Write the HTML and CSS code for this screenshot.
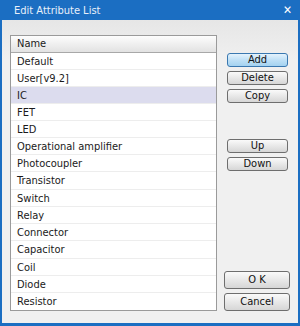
FILE: index.html
```html
<!DOCTYPE html>
<html lang="en">
<head>
  <meta charset="UTF-8" />
  <title>Edit Attribute List</title>
  <link rel="stylesheet" href="styles.css">
</head>
<body>
  <div class="window">
    <div class="titlebar">
      <span class="title">Edit Attribute List</span>
      <span class="close">&#x2715;</span>
    </div>
    <div class="content">
      <div class="listbox">
        <div class="list-header">Name</div>
        <div class="row">Default</div>
        <div class="row">User[v9.2]</div>
        <div class="row selected">IC</div>
        <div class="row">FET</div>
        <div class="row">LED</div>
        <div class="row">Operational amplifier</div>
        <div class="row">Photocoupler</div>
        <div class="row">Transistor</div>
        <div class="row">Switch</div>
        <div class="row">Relay</div>
        <div class="row">Connector</div>
        <div class="row">Capacitor</div>
        <div class="row">Coil</div>
        <div class="row">Diode</div>
        <div class="row">Resistor</div>
      </div>
      <div class="buttons">
        <button class="btn default">Add</button>
        <button class="btn">Delete</button>
        <button class="btn">Copy</button>
        <button class="btn group-start">Up</button>
        <button class="btn">Down</button>
        <button class="btn wide ok">O K</button>
        <button class="btn wide">Cancel</button>
      </div>
    </div>
  </div>
</body>
</html>
```

FILE: styles.css
```css
body {
  margin: 0;
  font-family: "DejaVu Sans Condensed", "DejaVu Sans", sans-serif;
  font-size: 11px;
  color: #1a1a1a;
}

.window {
  width: 300px;
  height: 326px;
  box-sizing: border-box;
  background: #1b6ec2;
  padding: 0 2px 3px;
  display: flex;
  flex-direction: column;
}

.titlebar {
  height: 20px;
  display: flex;
  align-items: center;
  justify-content: space-between;
  padding: 0 6px 0 12px;
  color: #e8f0fa;
  font-size: 11px;
}

.close {
  font-size: 12px;
  font-weight: bold;
  color: #ffffff;
}

.content {
  flex: 1;
  background: linear-gradient(#e6e6e6, #f0f0f0 40px, #f0f0f0);
  display: flex;
  padding: 15px 0 0 8px;
}

.listbox {
  width: 207px;
  height: 276px;
  box-sizing: border-box;
  border: 1px solid #9a9a9a;
  background: #fff;
  overflow: hidden;
}

.list-header {
  height: 16px;
  line-height: 16px;
  padding-left: 6px;
  background: linear-gradient(#fdfdfd, #e2e2e2);
  border-bottom: 1px solid #a8a8a8;
}

.row {
  height: 17px;
  line-height: 17px;
  box-sizing: border-box;
  padding-left: 6px;
  border-bottom: 1px solid #ededed;
}

.row:nth-child(n+8) {
  height: 17.3px;
}

.row.selected {
  background: #dcdcee;
}

.buttons {
  display: flex;
  flex-direction: column;
  align-items: flex-start;
  width: 66px;
  margin-left: 7px;
  padding-top: 18px;
}

.btn {
  width: 61px;
  height: 14px;
  margin: 0 0 4px 3px;
  padding: 0;
  border: 1px solid #6e6e6e;
  border-radius: 3px;
  background: linear-gradient(#fafafa, #e8e8e8 50%, #d6d6d6);
  font-family: "DejaVu Sans Condensed", "DejaVu Sans", sans-serif;
  font-size: 11px;
  line-height: 12px;
  color: #111;
}

.btn.default {
  border-color: #3a78b0;
  background: linear-gradient(#e4f2fc, #bfe0f6 50%, #a4d2f0);
}

.btn.group-start {
  margin-top: 32px;
}

.btn.wide {
  width: 66px;
  height: 18px;
  margin-left: 0;
}

.btn.ok {
  margin-top: 96px;
}
```
